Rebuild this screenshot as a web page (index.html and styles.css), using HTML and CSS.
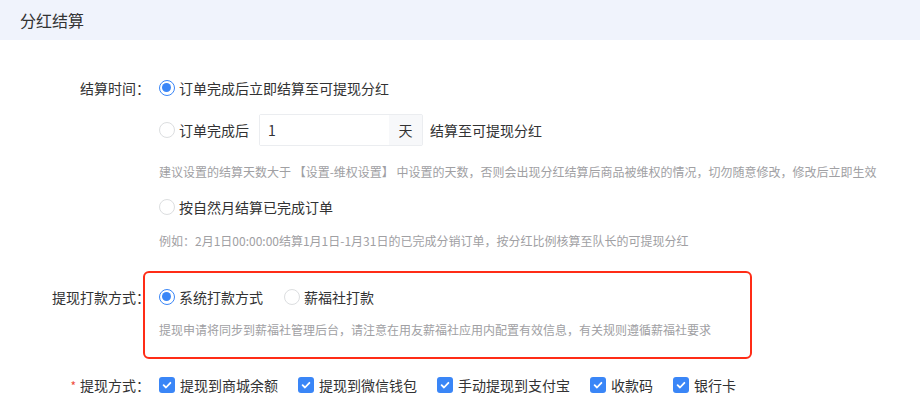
FILE: index.html
```html
<!DOCTYPE html>
<html lang="zh-CN">
<head>
<meta charset="utf-8">
<link rel="stylesheet" href="styles.css">
</head>
<body>
<div class="page">
  <div class="header">分红结算</div>
  <div class="form">
    <div class="field">
      <div class="label">结算时间：</div>
      <div class="content">
        <div class="opt">
          <span class="radio checked"></span><span class="opt-text">订单完成后立即结算至可提现分红</span>
        </div>
        <div class="opt opt-gap">
          <span class="radio"></span><span class="opt-text">订单完成后</span>
          <div class="input-group">
            <div class="input">1</div>
            <div class="addon">天</div>
          </div>
          <span class="after-text">结算至可提现分红</span>
        </div>
        <div class="hint hint-a">建议设置的结算天数大于 【设置-维权设置】 中设置的天数，否则会出现分红结算后商品被维权的情况，切勿随意修改，修改后立即生效</div>
        <div class="opt opt-gap">
          <span class="radio"></span><span class="opt-text">按自然月结算已完成订单</span>
        </div>
        <div class="hint hint-b">例如：2月1日00:00:00结算1月1日-1月31日的已完成分销订单，按分红比例核算至队长的可提现分红</div>
      </div>
    </div>

    <div class="field field-pay">
      <div class="highlight"></div>
      <div class="label">提现打款方式：</div>
      <div class="content">
        <div class="opt">
          <span class="radio checked"></span><span class="opt-text">系统打款方式</span>
          <span class="radio radio-next"></span><span class="opt-text">薪福社打款</span>
        </div>
        <div class="hint hint-c">提现申请将同步到薪福社管理后台，请注意在用友薪福社应用内配置有效信息，有关规则遵循薪福社要求</div>
      </div>
    </div>

    <div class="field field-way">
      <div class="label"><span class="req">*</span>提现方式：</div>
      <div class="content">
        <div class="opt checks">
          <span class="check-item"><span class="checkbox"><svg viewBox="0 0 16 16" width="16" height="16"><path d="M4.6 8.2 L7 10.5 L11.4 5.8" fill="none" stroke="#fff" stroke-width="1.8" stroke-linecap="round" stroke-linejoin="round"/></svg></span><span class="opt-text">提现到商城余额</span></span>
          <span class="check-item"><span class="checkbox"><svg viewBox="0 0 16 16" width="16" height="16"><path d="M4.6 8.2 L7 10.5 L11.4 5.8" fill="none" stroke="#fff" stroke-width="1.8" stroke-linecap="round" stroke-linejoin="round"/></svg></span><span class="opt-text">提现到微信钱包</span></span>
          <span class="check-item"><span class="checkbox"><svg viewBox="0 0 16 16" width="16" height="16"><path d="M4.6 8.2 L7 10.5 L11.4 5.8" fill="none" stroke="#fff" stroke-width="1.8" stroke-linecap="round" stroke-linejoin="round"/></svg></span><span class="opt-text">手动提现到支付宝</span></span>
          <span class="check-item"><span class="checkbox"><svg viewBox="0 0 16 16" width="16" height="16"><path d="M4.6 8.2 L7 10.5 L11.4 5.8" fill="none" stroke="#fff" stroke-width="1.8" stroke-linecap="round" stroke-linejoin="round"/></svg></span><span class="opt-text">收款码</span></span>
          <span class="check-item"><span class="checkbox"><svg viewBox="0 0 16 16" width="16" height="16"><path d="M4.6 8.2 L7 10.5 L11.4 5.8" fill="none" stroke="#fff" stroke-width="1.8" stroke-linecap="round" stroke-linejoin="round"/></svg></span><span class="opt-text">银行卡</span></span>
        </div>
      </div>
    </div>
  </div>
</div>
</body>
</html>
```

FILE: styles.css
```css
* { box-sizing: border-box; }
html, body { margin: 0; padding: 0; background: #fff; }
body {
  font-family: "Noto Sans CJK SC", "Noto Sans", sans-serif;
  color: #323233;
  font-size: 14px;
  width: 920px;
  height: 402px;
  overflow: hidden;
}
.header {
  height: 40px;
  line-height: 40px;
  background: #f0f3fc;
  padding-left: 20px;
  font-size: 16px;
  color: #323233;
}
.form { padding-top: 32px; }
.field { display: flex; align-items: flex-start; position: relative; }
.label {
  width: 150px;
  flex: none;
  text-align: right;
  line-height: 32px;
  height: 32px;
  color: #323233;
}
.req { color: #ee4d3d; margin-right: 4px; font-size: 12px; }
.content { margin-left: 9px; flex: 1; }
.opt { display: flex; align-items: center; height: 32px; }
.opt-gap { margin-top: 10px; }
.radio {
  width: 16px; height: 16px; flex: none;
  border: 1px solid #dcdee0;
  border-radius: 50%;
  background: #fff;
  position: relative;
}
.radio.checked { border: 1.5px solid #3a86f7; }
.radio.checked::after {
  content: "";
  position: absolute;
  left: 2px; top: 2px;
  width: 9px; height: 9px;
  border-radius: 50%;
  background: #3a86f7;
}
.radio-next { margin-left: 21px; }
.opt-text { margin-left: 4px; line-height: 20px; white-space: nowrap; }
.input-group {
  display: flex;
  margin-left: 10px;
  height: 32px;
  border: 1px solid #ebedf0;
  border-radius: 2px;
}
.input {
  width: 129px;
  padding-left: 8px;
  line-height: 30px;
  color: #323233;
  background: #fff;
}
.addon {
  width: 33px;
  background: #f7f8fa;
  text-align: center;
  line-height: 30px;
  color: #323233;
}
.after-text { margin-left: 7px; white-space: nowrap; }
.hint {
  font-size: 12px;
  line-height: 18px;
  color: #a0a0a3;
  white-space: nowrap;
}
.hint-a { margin-top: 17px; }
.hint-b { margin-top: 9px; }
.field-pay { margin-top: 31px; }
.hint-c { margin-top: 8px; }
.highlight {
  position: absolute;
  left: 143px;
  top: -10px;
  width: 609px;
  height: 88px;
  border: 2.5px solid #ff2c16;
  border-radius: 6px;
  pointer-events: none;
}
.field-way { margin-top: 30px; }
.checks { gap: 20px; }
.check-item { display: inline-flex; align-items: center; }
.checkbox {
  width: 16px; height: 16px; flex: none;
  background: #3a86f7;
  border-radius: 3px;
  display: inline-flex;
}
.check-item .opt-text { margin-left: 5px; }
```
